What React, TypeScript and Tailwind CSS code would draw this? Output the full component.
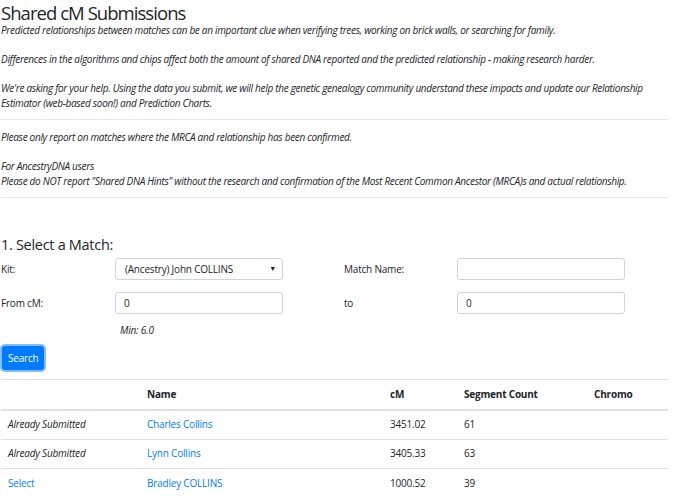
import React from "react";

const font = { fontFamily: '"Open Sans", "Noto Sans", sans-serif' };

function Row({ first, name, cm, seg, select }: { first: string; name: string; cm: string; seg: string; select?: boolean }) {
  return (
    <tr className="border-b border-[#dee2e6] h-[29.5px]">
      <td className={"pl-[7px] " + (select ? "text-[#007bff]" : "italic")}>{first}</td>
      <td className="text-[#007bff]">{name}</td>
      <td>{cm}</td>
      <td>{seg}</td>
      <td></td>
    </tr>
  );
}

export default function App() {
  return (
    <div className="w-[674px] h-[497px] overflow-hidden bg-white text-[#212529] text-[10px] tracking-[-0.2px]" style={font}>
      <div className="pl-[1px] pr-[6px]">
        <h2 className="text-[18.5px] leading-[26px] font-normal tracking-[-0.95px] mb-[-3px]">Shared cM Submissions</h2>
        <div className="italic leading-[15px] tracking-[-0.3px]">
          <p className="mb-[14px]">Predicted relationships between matches can be an important clue when verifying trees, working on brick walls, or searching for family.</p>
          <p className="mb-[14px]">Differences in the algorithms and chips affect both the amount of shared DNA reported and the predicted relationship - making research harder.</p>
          <p>We're asking for your help. Using the data you submit, we will help the genetic genealogy community understand these impacts and update our Relationship Estimator (web-based soon!) and Prediction Charts.</p>
          <div className="h-px bg-[#e5e5e5] mt-[8px] mb-[10px]" />
          <p className="mb-[14px]">Please only report on matches where the MRCA and relationship has been confirmed.</p>
          <p>For AncestryDNA users</p>
          <p>Please do NOT report "Shared DNA Hints" without the research and confirmation of the Most Recent Common Ancestor (MRCA)s and actual relationship.</p>
          <div className="h-px bg-[#e5e5e5] mt-[8px]" />
        </div>
        <h3 className="text-[14.5px] leading-[18px] font-normal mt-[38px] mb-[4px] tracking-[-0.3px]">1. Select a Match:</h3>
        <div className="grid grid-cols-[114px_228px_114px_168px] items-center gap-y-[12px]">
          <div>Kit:</div>
          <div className="w-[168px] h-[22px] border border-[#ced4da] rounded-[3px] flex items-center justify-between pl-[9px] pr-[6px]">
            <span>(Ancestry) John COLLINS</span>
            <span className="text-[7px]">▼</span>
          </div>
          <div className="pl-[1px]">Match Name:</div>
          <div className="h-[22px] border border-[#ced4da] rounded-[3px]" />
          <div>From cM:</div>
          <div className="w-[168px] h-[22px] border border-[#ced4da] rounded-[3px] flex items-center pl-[8px]">0</div>
          <div className="pl-[1px]">to</div>
          <div className="h-[22px] border border-[#ced4da] rounded-[3px] flex items-center pl-[8px]">0</div>
        </div>
        <div className="italic pl-[119px] mt-[9px] leading-[14px]">Min: 6.0</div>
        <div className="mt-[9px]">
          <button className="h-[24px] px-[6px] rounded-[3px] bg-[#007bff] text-white ring-2 ring-[#80bdff] ml-[1px]" style={font}>Search</button>
        </div>
        <table className="w-[667px] mt-[9px] border-collapse text-left">
          <thead>
            <tr className="border-t border-[#dee2e6] border-b-2 h-[30px]">
              <th className="w-[146px]"></th>
              <th className="w-[243px] font-bold">Name</th>
              <th className="w-[74px] font-bold">cM</th>
              <th className="w-[130px] font-bold">Segment Count</th>
              <th className="font-bold">Chromo</th>
            </tr>
          </thead>
          <tbody>
            <Row first="Already Submitted" name="Charles Collins" cm="3451.02" seg="61" />
            <Row first="Already Submitted" name="Lynn Collins" cm="3405.33" seg="63" />
            <Row first="Select" name="Bradley COLLINS" cm="1000.52" seg="39" select />
          </tbody>
        </table>
      </div>
    </div>
  );
}
